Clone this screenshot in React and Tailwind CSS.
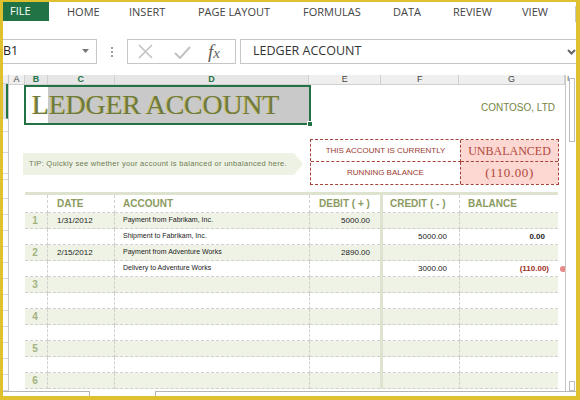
import React from "react";

const tabs = [
  ["HOME", "w-[62px]"],
  ["INSERT", "w-[69px]"],
  ["PAGE LAYOUT", "w-[105px]"],
  ["FORMULAS", "w-[90px]"],
  ["DATA", "w-[60px]"],
  ["REVIEW", "w-[69px]"],
  ["VIEW", "w-[50px]"],
];

const colHeads = [
  ["A", "w-[16px]", false],
  ["B", "w-[23px]", true],
  ["C", "w-[67px]", true],
  ["D", "w-[195px]", true],
  ["E", "w-[72px]", false],
  ["F", "w-[78px]", false],
  ["G", "w-[106px]", false],
];

const rows = [
  { n: "1", date: "1/31/2012", acct: "Payment from Fabrikam, Inc.", debit: "5000.00" },
  { acct: "Shipment to Fabrikam, Inc.", credit: "5000.00", bal: "0.00" },
  { n: "2", date: "2/15/2012", acct: "Payment from Adventure Works", debit: "2890.00" },
  { acct: "Delivery to Adventure Works", credit: "3000.00", bal: "(110.00)", neg: true },
  { n: "3" },
  {},
  { n: "4" },
  {},
  { n: "5" },
  {},
  { n: "6" },
];

const sliverRows = [
  "h-[39px] bg-[#e1e1e1] border-r-2 border-r-[#217346]",
  "h-[15px]",
  "h-[23px]",
  "h-[23px]",
  "h-[7px]",
  "h-[21px]",
];

const TableRow = ({ r, band }) => {
  const bg = band ? "bg-[#eff3e6]" : "bg-white";
  const cell = `h-full border-b border-dashed border-[#d0d0d0] ${bg}`;
  return (
    <div className="grid grid-cols-[23px_67px_195px_70px_3px_77px_98px] h-[16px] relative">
      <div className={`${cell} border-r flex items-center justify-center pr-[2px] text-[10px] font-bold text-[#a3b27f]`}>
        {r.n}
      </div>
      <div className={`${cell} border-r flex items-center pl-[9px] text-[8px] text-[#222]`}>{r.date}</div>
      <div className={`${cell} border-r flex items-center pl-[8px] text-[7px] text-[#222]`}>{r.acct}</div>
      <div className={`${cell} flex items-center justify-end pr-[10px] text-[8px] text-[#222]`}>{r.debit}</div>
      <div className="h-full bg-[#dde3cf]" />
      <div className={`${cell} border-r flex items-center justify-end pr-[12px] text-[8px] text-[#222]`}>{r.credit}</div>
      <div
        className={`${cell} flex items-center justify-end text-[8px] font-bold ${
          r.neg ? "pr-[9px] text-[#9c2f1f]" : "pr-[13px] text-[#222]"
        }`}
      >
        {r.bal}
      </div>
      {r.neg && <div className="absolute right-[-8px] top-[5px] w-[6px] h-[6px] rounded-full bg-[#e8898a]" />}
    </div>
  );
};

export default function App() {
  return (
    <div className="w-[580px] h-[400px] bg-[#dfc12f] pt-[2px] pl-[3px] pr-[4px] pb-[4px] overflow-hidden font-['Liberation_Sans',Arial,sans-serif]">
      <div className="w-full h-full bg-white flex flex-col overflow-hidden">
        {/* Ribbon tabs */}
        <div className="h-[20px] flex items-stretch font-['Open_Sans',sans-serif] text-[11px] text-[#444]">
          <div className="w-[46px] h-[19px] bg-[#217346] text-white flex items-center pl-[7px]">FILE</div>
          <div className="w-[18px]" />
          {tabs.map(([t, w]) => (
            <div key={t} className={`${w} flex items-center`}>
              {t}
            </div>
          ))}
          <div className="ml-auto mt-[4px] w-px h-[16px] bg-[#c6c6c6]" />
        </div>

        <div className="h-[17px]" />

        {/* Formula bar */}
        <div className="h-[25px] flex items-stretch font-['Open_Sans',sans-serif]">
          <div className="w-[94px] border-y border-r border-[#c6c6c6] flex items-center justify-between text-[12.5px] text-[#222]">
            <span className="leading-none">B1</span>
            <svg width="8" height="5" viewBox="0 0 8 5" className="mr-[6px]">
              <path d="M0 0h7L3.5 4z" fill="#777" />
            </svg>
          </div>
          <div className="w-[30px] flex flex-col items-center justify-center gap-[2px]">
            <div className="w-[2px] h-[2px] bg-[#9a9a9a]" />
            <div className="w-[2px] h-[2px] bg-[#9a9a9a]" />
            <div className="w-[2px] h-[2px] bg-[#9a9a9a]" />
          </div>
          <div className="w-[109px] border border-[#c6c6c6] flex items-center">
            <svg width="15" height="15" viewBox="0 0 15 15" className="ml-[10px]">
              <path d="M1 1l13 13M14 1L1 14" stroke="#c2c2c2" strokeWidth="1.6" />
            </svg>
            <svg width="17" height="13" viewBox="0 0 17 13" className="ml-[21px] mt-[2px]">
              <path d="M1 7l5 5L16 1" stroke="#c2c2c2" strokeWidth="2" fill="none" />
            </svg>
            <span className="ml-[17px] font-['Liberation_Serif',serif] italic text-[19px] text-[#5e5e5e] leading-none">
              f<span className="text-[15px]">x</span>
            </span>
          </div>
          <div className="w-[4px]" />
          <div className="flex-1 border-y border-l border-[#c6c6c6] flex items-center pl-[12px] text-[12.5px] text-[#333]">
            <span>LEDGER ACCOUNT</span>
            <svg width="9" height="6" viewBox="0 0 9 6" className="ml-auto">
              <path d="M1 1l3.5 3.5L8 1" stroke="#666" strokeWidth="2" fill="none" />
            </svg>
          </div>
        </div>

        <div className="h-[11px]" />

        {/* Sheet */}
        <div className="h-[316px] flex">
          {/* row header sliver */}
          <div className="w-[6px] flex flex-col border-r border-[#c6c6c6]">
            <div className="h-[10px] bg-[#efefef] border-b border-[#d0d0d0]" />
            {sliverRows.map((c, i) => (
              <div key={i} className={`${c} border-b border-[#d8d8d8]`} />
            ))}
            {Array.from({ length: 12 }).map((_, i) => (
              <div key={i} className="h-[16px] shrink-0 border-b border-[#d8d8d8]" />
            ))}
          </div>

          {/* grid */}
          <div className="w-[557px] flex flex-col border-r border-[#c6c6c6] overflow-hidden">
            {/* column headers */}
            <div className="h-[10px] flex bg-[#efefef] border-b border-[#d0d0d0] text-[9px] leading-none">
              {colHeads.map(([l, w, sel]) => (
                <div
                  key={l}
                  className={`${w} border-r border-[#d0d0d0] flex items-center justify-center ${
                    sel ? "text-[#217346] font-bold bg-[#e6e6e6]" : "text-[#444]"
                  }`}
                >
                  {l}
                </div>
              ))}
            </div>

            {/* title row */}
            <div className="h-[40px] flex items-start shrink-0">
              <div className="w-[15px]" />
              <div className="relative w-[287px] h-[40px] border-2 border-[#217346] flex">
                <div className="w-[22px] bg-white" />
                <div className="flex-1 bg-[#c9c9c9]" />
                <span className="absolute left-[6px] top-[4px] font-['Liberation_Serif',serif] text-[28px] leading-none tracking-[-0.3px] text-[#6f7a3d] [text-shadow:-1px_0_0_#c9c06c]">
                  LEDGER ACCOUNT
                </span>
                <div className="absolute right-[-4px] bottom-[-4px] w-[6px] h-[6px] bg-[#217346] border border-white" />
              </div>
              <div className="ml-auto mr-[10px] self-center mt-[4px] text-[10px] text-[#77843f]">CONTOSO, LTD</div>
            </div>

            <div className="h-[14px] shrink-0" />

            {/* tip + status */}
            <div className="h-[46px] flex items-start shrink-0">
              <div className="w-[14px]" />
              <div className="mt-[14px] w-[280px] h-[22px] bg-[#eef2e5] flex items-center pl-[6px] text-[7.5px] tracking-[0.3px] text-[#6d7b52] [clip-path:polygon(0_0,calc(100%-9px)_0,100%_50%,calc(100%-9px)_100%,0_100%)]">
                TIP: Quickly see whether your account is balanced or unbalanced here.
              </div>
              <div className="w-[7px]" />
              <div className="w-[249px] h-[46px] border border-dashed border-[#a6443a] grid grid-cols-[150px_1fr] grid-rows-2">
                <div className="border-r border-b border-dashed border-[#a6443a] flex items-center justify-center text-[8px] text-[#9b3b2f]">
                  THIS ACCOUNT IS CURRENTLY
                </div>
                <div className="border-b border-dashed border-[#a6443a] bg-[#fdd8d2] flex items-center justify-center font-['Liberation_Serif',serif] text-[12px] text-[#b0473a]">
                  UNBALANCED
                </div>
                <div className="border-r border-dashed border-[#a6443a] flex items-center justify-center text-[8px] text-[#9b3b2f]">
                  RUNNING BALANCE
                </div>
                <div className="bg-[#fdd8d2] flex items-center justify-center font-['Liberation_Serif',serif] text-[13px] tracking-[0.6px] text-[#b0473a]">
                  (110.00)
                </div>
              </div>
            </div>

            <div className="h-[7px] shrink-0" />

            {/* ledger table */}
            <div className="ml-[16px] w-[533px] border-t-[3px] border-[#dde3cf] shrink-0">
              <div className="grid grid-cols-[23px_67px_195px_70px_3px_77px_98px] h-[18px] text-[10px] font-bold text-[#8b9b60]">
                <div className="border-r border-b border-dashed border-[#d0d0d0]" />
                <div className="border-r border-b border-dashed border-[#d0d0d0] flex items-center pl-[9px]">DATE</div>
                <div className="border-r border-b border-dashed border-[#d0d0d0] flex items-center pl-[8px]">ACCOUNT</div>
                <div className="border-b border-dashed border-[#d0d0d0] flex items-center pl-[9px]">DEBIT ( + )</div>
                <div className="bg-[#dde3cf]" />
                <div className="border-r border-b border-dashed border-[#d0d0d0] flex items-center pl-[7px]">CREDIT ( - )</div>
                <div className="border-b border-dashed border-[#d0d0d0] flex items-center pl-[8px]">BALANCE</div>
              </div>
              {rows.map((r, i) => (
                <TableRow key={i} r={r} band={i % 2 === 0} />
              ))}
            </div>
          </div>

          {/* right strip with scrollbar */}
          <div className="flex-1 flex flex-col items-start">
            <div className="h-[10px] text-[8px] leading-none text-[#444] pl-[1px]">I</div>
            <div className="ml-[3px] w-[6px] h-[64px] -mt-[7px] border border-[#bdbdbd] bg-white" />
            <div className="mt-auto ml-[3px] w-[6px] h-[10px] border border-[#bdbdbd]" />
          </div>
        </div>

        {/* sheet tab bar */}
        <div className="h-[5px] flex">
          <div className="w-[87px] border-t border-r border-[#b5b5b5]" />
          <div className="w-[65px]" />
          <div className="flex-1 border-t border-l border-[#b5b5b5]" />
        </div>
      </div>
    </div>
  );
}
